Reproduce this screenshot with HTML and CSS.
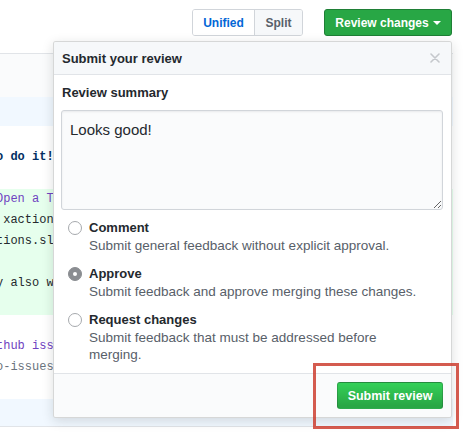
FILE: index.html
```html
<!DOCTYPE html>
<html>
<head>
<meta charset="utf-8">
<link rel="stylesheet" href="styles.css">
</head>
<body>
<div class="page">
  <div class="toolbar">
    <div class="btn-group">
      <span class="seg seg-active">Unified</span>
      <span class="seg">Split</span>
    </div>
    <span class="btn-review">Review changes <span class="caret"></span></span>
  </div>

  <div class="file">
    <div class="file-header"></div>
    <div class="hunk"></div>
    <div class="code">
      <div class="line"></div>
      <div class="line"><span class="str">o do it!</span></div>
      <div class="line"></div>
      <div class="line add"><span class="kw">Open a T</span></div>
      <div class="line add"> xactions</div>
      <div class="line add">tions.sl</div>
      <div class="line add"></div>
      <div class="line add">y also w</div>
      <div class="line add"></div>
      <div class="line"></div>
      <div class="line"><span class="kw">thub iss</span></div>
      <div class="line"><span class="cm">o-issues</span></div>
      <div class="line"></div>
    </div>
    <div class="expand"></div>
  </div>

  <div class="popup">
    <div class="popup-header">
      <span class="popup-title">Submit your review</span>
      <svg class="close" width="10" height="10" viewBox="0 0 10 10"><path d="M1 1 L9 9 M9 1 L1 9" stroke="#c5c8cc" stroke-width="1.6" stroke-linecap="round"/></svg>
    </div>
    <div class="popup-body">
      <div class="summary-label">Review summary</div>
      <textarea class="summary">Looks good!</textarea>
      <div class="options">
        <div class="option">
          <span class="radio"></span>
          <div class="option-text">
            <div class="option-title">Comment</div>
            <div class="option-desc">Submit general feedback without explicit approval.</div>
          </div>
        </div>
        <div class="option">
          <span class="radio radio-checked"></span>
          <div class="option-text">
            <div class="option-title">Approve</div>
            <div class="option-desc">Submit feedback and approve merging these changes.</div>
          </div>
        </div>
        <div class="option">
          <span class="radio"></span>
          <div class="option-text">
            <div class="option-title">Request changes</div>
            <div class="option-desc">Submit feedback that must be addressed before merging.</div>
          </div>
        </div>
      </div>
    </div>
    <div class="popup-footer">
      <span class="btn-submit">Submit review</span>
    </div>
  </div>

  <div class="highlight"></div>
</div>
</body>
</html>
```
FILE: styles.css
```css
* { box-sizing: border-box; }
html, body { margin: 0; padding: 0; background: #fff; }
body {
  font-family: "Liberation Sans", Arial, sans-serif;
  color: #24292e;
  width: 469px;
  height: 439px;
  overflow: hidden;
}
.page { position: relative; width: 469px; height: 439px; }

.toolbar {
  height: 53px;
  display: flex;
  justify-content: flex-end;
  align-items: flex-start;
  padding: 9px 17px 0 0;
  gap: 21px;
}
.btn-group {
  display: flex;
  height: 27px;
  border: 1px solid #d1d5da;
  border-radius: 3px;
  overflow: hidden;
}
.seg {
  display: flex;
  align-items: center;
  justify-content: center;
  font-size: 12px;
  font-weight: bold;
  color: #586069;
  background: #f6f8fa;
  height: 100%;
}
.seg-active {
  width: 62px;
  color: #0366d6;
  background: #fff;
  border-right: 1px solid #d1d5da;
}
.seg:not(.seg-active) { width: 47px; }
.btn-review {
  display: flex;
  align-items: center;
  justify-content: center;
  width: 128px;
  height: 27px;
  background: #28a745;
  border: 1px solid #1f7f36;
  border-radius: 3px;
  color: #fff;
  font-size: 12px;
  font-weight: bold;
  gap: 4px;
}
.caret {
  display: inline-block;
  width: 0;
  height: 0;
  border-left: 4px solid transparent;
  border-right: 4px solid transparent;
  border-top: 4px solid #fff;
  margin-top: 1px;
}

.file {
  width: 453px;
  border-top: 1px solid #e1e4e8;
  border-bottom: 1px solid #e1e4e8;
}
.file-header { height: 43px; background: #fafbfc; }
.hunk { height: 29px; background: #f1f8ff; }
.code {
  font-family: "Liberation Mono", "DejaVu Sans Mono", monospace;
  font-size: 12px;
  overflow: hidden;
}
.line {
  height: 21px;
  line-height: 21px;
  white-space: pre;
  text-indent: -4px;
  color: #24292e;
}
.line.add { background: #e6ffed; }
.str { color: #032f62; font-weight: bold; }
.kw { color: #6f42c1; }
.cm { color: #6a737d; }
.expand { height: 27px; background: #f1f8ff; }

.popup {
  position: absolute;
  left: 53px;
  top: 41px;
  width: 399px;
  height: 377px;
  background: #fff;
  border: 1px solid rgba(27,31,35,0.18);
  border-radius: 3px;
  box-shadow: 0 3px 12px rgba(27,31,35,0.15);
  display: flex;
  flex-direction: column;
  overflow: hidden;
}
.popup-header {
  height: 33px;
  flex: none;
  display: flex;
  align-items: center;
  justify-content: space-between;
  padding: 0 11px 0 8px;
  background: #f6f8fa;
  border-bottom: 1px solid #e1e4e8;
}
.popup-title { font-size: 13px; font-weight: bold; color: #24292e; }
.close { display: block; }

.popup-body {
  flex: 1;
  min-height: 0;
  padding: 9px 8px 0 8px;
}
.summary-label {
  font-size: 13px;
  font-weight: bold;
  line-height: 18px;
  margin-bottom: 8px;
}
.summary {
  display: block;
  width: 382px;
  height: 100px;
  margin: 0 0 0 -1px;
  padding: 10px 8px;
  background: #fafbfc;
  border: 1px solid #d1d5da;
  border-radius: 3px;
  font-family: "Liberation Sans", Arial, sans-serif;
  font-size: 15px;
  line-height: 18px;
  color: #24292e;
  resize: vertical;
  box-shadow: inset 0 1px 2px rgba(27,31,35,0.075);
}
.options {
  display: flex;
  flex-direction: column;
  gap: 11px;
  margin-top: 9px;
}
.option { display: flex; align-items: flex-start; }
.radio {
  flex: none;
  width: 14px;
  height: 14px;
  border-radius: 50%;
  border: 1px solid #a6a9ad;
  background: #fff;
  margin: 2px 0 0 6px;
  display: flex;
  align-items: center;
  justify-content: center;
}
.radio-checked {
  background: #8a8d91;
  border-color: #8a8d91;
}
.radio-checked::after {
  content: "";
  width: 4px;
  height: 4px;
  border-radius: 50%;
  background: #fff;
}
.option-text { margin-left: 7px; }
.option-title {
  font-size: 13px;
  font-weight: bold;
  line-height: 18px;
}
.option-desc {
  font-size: 13.5px;
  line-height: 17px;
  color: #586069;
  max-width: 340px;
}

.popup-footer {
  height: 44px;
  flex: none;
  display: flex;
  align-items: flex-start;
  justify-content: flex-end;
  padding: 8px 8px 0 0;
  background: #fafbfc;
  border-top: 1px solid #e1e4e8;
}
.btn-submit {
  display: flex;
  align-items: center;
  justify-content: center;
  width: 106px;
  height: 27px;
  background: linear-gradient(#34d058, #28a745 90%);
  border: 1px solid rgba(27,31,35,0.2);
  border-radius: 3px;
  color: #fff;
  font-size: 12.5px;
  font-weight: bold;
}

.highlight {
  position: absolute;
  left: 313px;
  top: 363px;
  width: 146px;
  height: 66px;
  border: 3px solid rgba(204,62,48,0.85);
}
```
